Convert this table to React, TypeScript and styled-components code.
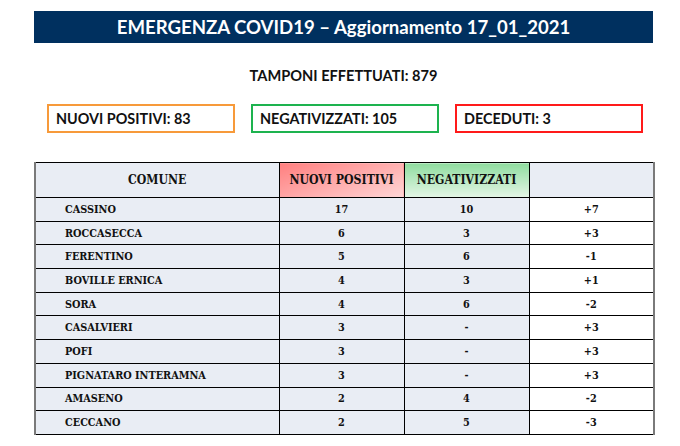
import styled, {createGlobalStyle} from "styled-components";

const GlobalStyle = createGlobalStyle`
  body {
    margin: 0;
    background: #ffffff;
  }
`;

const Page = styled.div`
  width: 680px;
  height: 446px;
  padding-top: 11px;
  box-sizing: border-box;
  overflow: hidden;
`;

const Banner = styled.div`
  margin-left: 34px;
  width: 619px;
  height: 32px;
  background: #00305f;
  color: #ffffff;
  display: flex;
  align-items: center;
  justify-content: center;
  font-family: Lato, "Liberation Sans", sans-serif;
  font-weight: 700;
  font-size: 18.6px;
`;

const Tamponi = styled.div`
  margin-left: 34px;
  width: 619px;
  margin-top: 24px;
  height: 18px;
  line-height: 18px;
  text-align: center;
  font-family: Lato, "Liberation Sans", sans-serif;
  font-weight: 700;
  font-size: 14.6px;
  color: #111;
`;

const StatRow = styled.div`
  margin-left: 47px;
  margin-top: 19px;
  width: 596px;
  display: grid;
  grid-template-columns: repeat(3, 1fr);
  column-gap: 16px;
`;

const StatBox = styled.div<{ $color: string }>`
  height: 29px;
  box-sizing: border-box;
  border: 2px solid ${(p) => p.$color};
  display: flex;
  align-items: center;
  padding-left: 7px;
  font-family: Lato, "Liberation Sans", sans-serif;
  font-weight: 700;
  font-size: 14.4px;
  color: #111;
`;

const Table = styled.table`
  margin-left: 34px;
  margin-top: 29px;
  width: 619px;
  border-collapse: collapse;
  table-layout: fixed;
  font-family: "DejaVu Serif Condensed", "DejaVu Serif", serif;
  font-stretch: condensed;
  font-weight: 700;
  color: #111;
  border-left: 2px solid #7a7a7a;
  border-right: 2px solid #7a7a7a;
`;

const HeadCell = styled.th<{ $tone?: "red" | "green" }>`
  height: 34px;
  padding: 0;
  font-size: 12.2px;
  border: 1px solid #000;
  background: ${(p) =>
    p.$tone === "red"
      ? "linear-gradient(160deg, #ff7f7f 0%, #ffd6d6 100%)"
      : p.$tone === "green"
      ? "linear-gradient(180deg, #8fdc9f 0%, #e4f6e6 100%)"
      : "#e9edf4"};
`;

const Cell = styled.td<{ $align?: "left"; $white?: boolean }>`
  height: 22.7px;
  padding: 0 0 0 ${(p) => (p.$align === "left" ? "29px" : "0")};
  font-size: 10.8px;
  text-align: ${(p) => (p.$align === "left" ? "left" : "center")};
  border: 1px solid #000;
  background: ${(p) => (p.$white ? "#ffffff" : "#e9edf4")};
  white-space: nowrap;
`;

const rows: [string, string, string, string][] = [
  ["CASSINO", "17", "10", "+7"],
  ["ROCCASECCA", "6", "3", "+3"],
  ["FERENTINO", "5", "6", "-1"],
  ["BOVILLE ERNICA", "4", "3", "+1"],
  ["SORA", "4", "6", "-2"],
  ["CASALVIERI", "3", "-", "+3"],
  ["POFI", "3", "-", "+3"],
  ["PIGNATARO INTERAMNA", "3", "-", "+3"],
  ["AMASENO", "2", "4", "-2"],
  ["CECCANO", "2", "5", "-3"],
];

const App = () => {
  return (
    <Page>
      <GlobalStyle />
      <Banner>EMERGENZA COVID19 – Aggiornamento 17_01_2021</Banner>
      <Tamponi>TAMPONI EFFETTUATI: 879</Tamponi>
      <StatRow>
        <StatBox $color="#f79a3a">NUOVI POSITIVI: 83</StatBox>
        <StatBox $color="#1db34f">NEGATIVIZZATI: 105</StatBox>
        <StatBox $color="#ff1a1a">DECEDUTI: 3</StatBox>
      </StatRow>
      <Table>
        <colgroup>
          <col style={{width: 244}} />
          <col style={{width: 125}} />
          <col style={{width: 125}} />
          <col style={{width: 125}} />
        </colgroup>
        <thead>
          <tr>
            <HeadCell>COMUNE</HeadCell>
            <HeadCell $tone="red">NUOVI POSITIVI</HeadCell>
            <HeadCell $tone="green">NEGATIVIZZATI</HeadCell>
            <HeadCell />
          </tr>
        </thead>
        <tbody>
          {rows.map(([comune, pos, neg, diff]) => (
            <tr key={comune}>
              <Cell $align="left">{comune}</Cell>
              <Cell>{pos}</Cell>
              <Cell>{neg}</Cell>
              <Cell $white>{diff}</Cell>
            </tr>
          ))}
        </tbody>
      </Table>
    </Page>
  );
};

export default App;
